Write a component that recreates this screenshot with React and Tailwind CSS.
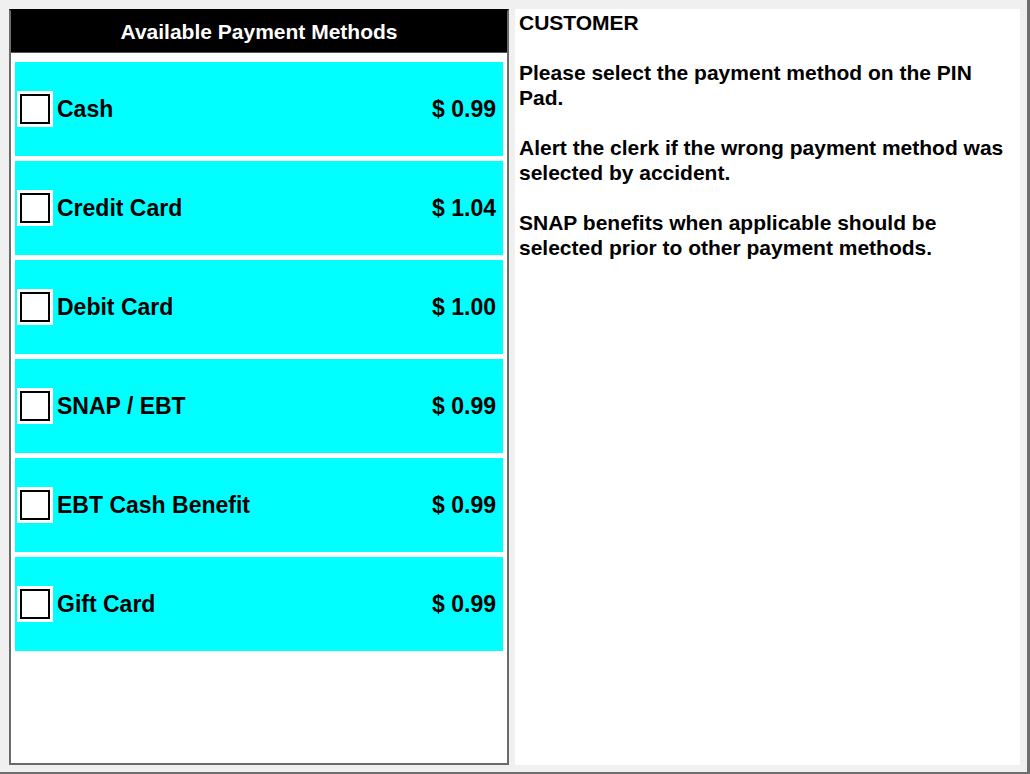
import React from "react";

const methods = [
  { name: "Cash", price: "$ 0.99" },
  { name: "Credit Card", price: "$ 1.04" },
  { name: "Debit Card", price: "$ 1.00" },
  { name: "SNAP / EBT", price: "$ 0.99" },
  { name: "EBT Cash Benefit", price: "$ 0.99" },
  { name: "Gift Card", price: "$ 0.99" },
];

export default function App() {
  return (
    <div
      className="w-[1030px] h-[774px] bg-[#f0f0f0] border-r-[3px] border-b-[2px] border-[#6e6e6e] flex flex-row gap-[6px] pt-[9px] pl-[9px] overflow-hidden"
      style={{ fontFamily: '"Liberation Sans", Arial, sans-serif' }}
    >
      <div className="w-[500px] h-[756px] shrink-0 bg-white border-2 border-[#6b6b6b] border-t-black flex flex-col">
        <div className="h-[42px] bg-black border-b border-[#555] flex items-center justify-center text-white font-bold text-[21px] leading-none shrink-0">
          Available Payment Methods
        </div>
        <div className="flex flex-col gap-[5px] px-[4px] pt-[9px]">
          {methods.map((m) => (
            <div
              key={m.name}
              className="h-[94px] bg-[#00ffff] flex items-center pl-[2px] pr-[7px]"
            >
              <div className="w-[36px] h-[36px] bg-white p-[3px] shrink-0">
                <div className="w-full h-full border-2 border-black bg-white" />
              </div>
              <div className="ml-[4px] flex-1 font-bold text-[23px] text-black leading-none">
                {m.name}
              </div>
              <div className="font-bold text-[23px] text-black leading-none">
                {m.price}
              </div>
            </div>
          ))}
        </div>
      </div>
      <div className="w-[505px] h-[756px] shrink-0 bg-white pl-[4px] pt-[1px] text-black font-bold text-[21px] leading-[25px]">
        <p>CUSTOMER</p>
        <p className="mt-[25px] w-[490px]">Please select the payment method on the PIN Pad.</p>
        <p className="mt-[25px] w-[490px]">Alert the clerk if the wrong payment method was selected by accident.</p>
        <p className="mt-[25px] w-[490px]">SNAP benefits when applicable should be selected prior to other payment methods.</p>
      </div>
    </div>
  );
}
